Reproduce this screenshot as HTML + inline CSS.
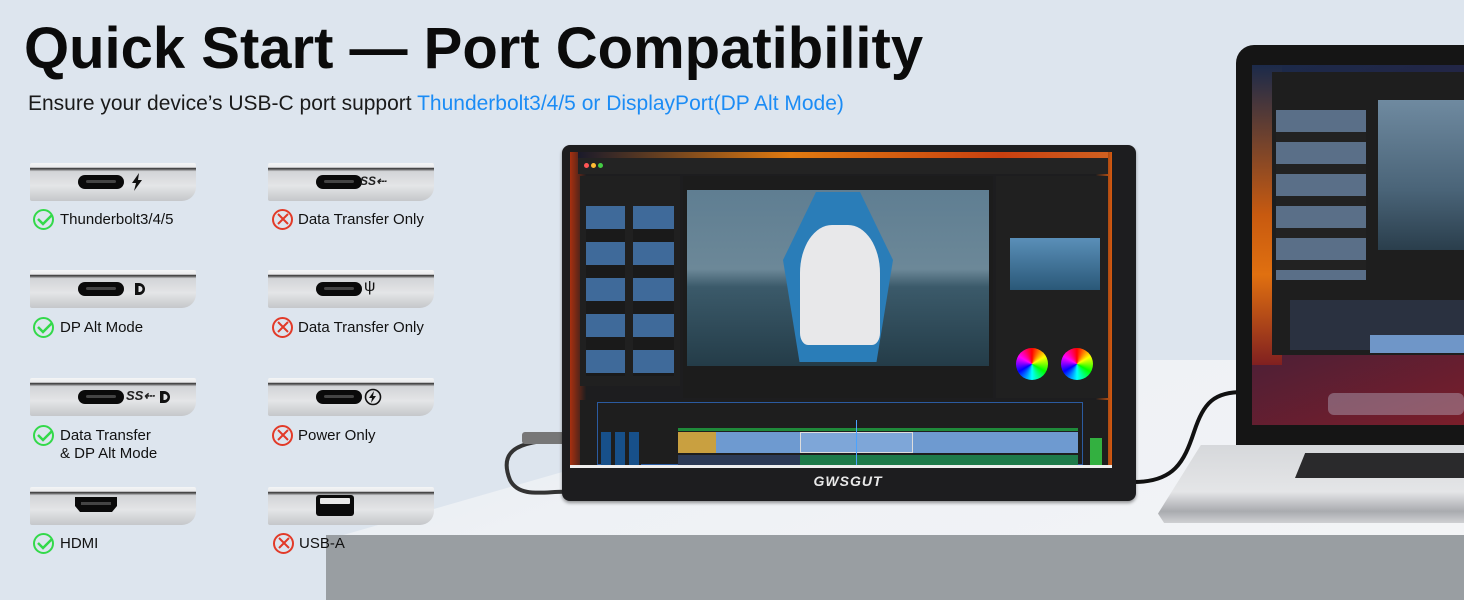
<!DOCTYPE html>
<html><head><meta charset="utf-8"><style>
*{margin:0;padding:0;box-sizing:border-box}
body{width:1464px;height:600px;overflow:hidden;background:#dde5ee;font-family:"Liberation Sans",sans-serif;position:relative}
.abs{position:absolute}
h1{position:absolute;left:24px;top:15px;font-size:58px;font-weight:bold;color:#0b0b0b;letter-spacing:0px;white-space:nowrap;transform-origin:left top}
.sub{position:absolute;left:28px;top:92px;font-size:21px;color:#1a1a1a;white-space:nowrap}
.sub span{color:#1b8cf5}
.card{position:absolute;width:166px;height:38px;border-radius:2px 2px 14px 2px;background:linear-gradient(#f4f5f6 0,#e9eaec 12%,#3a3a3a 13%,#555 16%,#d2d4d7 22%,#e4e5e7 60%,#c5c7ca 100%)}
.usbc{position:absolute;width:46px;height:14px;border-radius:7px;background:#0a0a0a;border:0}
.usbc:after{content:"";position:absolute;left:8px;right:8px;top:5px;height:3px;border-radius:2px;background:#444}
.lab{position:absolute;font-size:15px;color:#111;line-height:18px;white-space:nowrap}
.ic{position:absolute;width:21px;height:21px;border-radius:50%}
.ok{border:2.5px solid #33d94a}
.no{border:2px solid #e23a28}
</style></head><body>
<!-- desk -->
<div class="abs" style="left:326px;top:360px;width:1138px;height:180px;background:linear-gradient(160deg,#e4eaf0 0,#eef1f5 40%,#f3f4f6 100%);clip-path:polygon(0 100%,55% 0,100% 0,100% 100%)"></div>
<div class="abs" style="left:326px;top:535px;width:1138px;height:65px;background:#999ea2"></div>

<h1>Quick Start — Port Compatibility</h1>
<div class="sub">Ensure your device’s USB-C port support <span>Thunderbolt3/4/5 or DisplayPort(DP Alt Mode)</span></div>

<!-- cards col1 -->
<div class="card" style="left:30px;top:163px"><div class="usbc" style="left:48px;top:12px"></div><svg class="abs" style="left:100px;top:10px" width="14" height="18"><path d="M9 0L2 10h4l-2 8 8-11H8z" fill="#111"/></svg></div>
<div class="card" style="left:30px;top:270px"><div class="usbc" style="left:48px;top:12px"></div><svg class="abs" style="left:103px;top:12px" width="14" height="15"><path d="M2 1h4a6 6 0 010 12H2zM5.5 4v6h1a3 3 0 000-6z" fill="#111" fill-rule="evenodd"/></svg></div>
<div class="card" style="left:30px;top:378px"><div class="usbc" style="left:48px;top:12px"></div><span class="abs" style="left:96px;top:10px;font-size:13px;font-style:italic;font-weight:bold;color:#222">SS⇠</span><svg class="abs" style="left:128px;top:12px" width="14" height="15"><path d="M2 1h4a6 6 0 010 12H2zM5.5 4v6h1a3 3 0 000-6z" fill="#111" fill-rule="evenodd"/></svg></div>
<div class="card" style="left:30px;top:487px"><svg class="abs" style="left:45px;top:10px" width="42" height="16"><path d="M0 0h42v9l-5 6H5L0 9z" fill="#0a0a0a"/><rect x="6" y="5" width="30" height="3" fill="#444"/></svg></div>

<!-- cards col2 -->
<div class="card" style="left:268px;top:163px"><div class="usbc" style="left:48px;top:12px"></div><span class="abs" style="left:92px;top:11px;font-size:12px;font-style:italic;font-weight:bold;color:#222">SS⇠</span></div>
<div class="card" style="left:268px;top:270px"><div class="usbc" style="left:48px;top:12px"></div><span class="abs" style="left:96px;top:8px;font-size:16px;color:#111">ψ</span></div>
<div class="card" style="left:268px;top:378px"><div class="usbc" style="left:48px;top:12px"></div><svg class="abs" style="left:96px;top:10px" width="18" height="18"><circle cx="9" cy="9" r="7.5" fill="none" stroke="#111" stroke-width="1.6"/><path d="M10 3L5 10h3l-1 5 5-7H9z" fill="#111"/></svg></div>
<div class="card" style="left:268px;top:487px"><div class="abs" style="left:48px;top:8px;width:38px;height:21px;border-radius:3px;background:#0a0a0a"><div class="abs" style="left:4px;top:3px;width:30px;height:6px;background:#e8e8e8;border-radius:1px"></div></div></div>

<!-- labels -->
<div class="ic ok" style="left:33px;top:209px"></div><div class="lab" style="left:60px;top:211px">Thunderbolt3/4/5</div>
<div class="ic ok" style="left:33px;top:317px"></div><div class="lab" style="left:60px;top:319px">DP Alt Mode</div>
<div class="ic ok" style="left:33px;top:425px"></div><div class="lab" style="left:60px;top:427px">Data Transfer<br>&amp; DP Alt Mode</div>
<div class="ic ok" style="left:33px;top:533px"></div><div class="lab" style="left:60px;top:535px">HDMI</div>
<div class="ic no" style="left:272px;top:209px"></div><div class="lab" style="left:298px;top:211px">Data Transfer Only</div>
<div class="ic no" style="left:272px;top:317px"></div><div class="lab" style="left:298px;top:319px">Data Transfer Only</div>
<div class="ic no" style="left:272px;top:425px"></div><div class="lab" style="left:298px;top:427px">Power Only</div>
<div class="ic no" style="left:273px;top:533px"></div><div class="lab" style="left:299px;top:535px">USB-A</div>
<svg class="abs" style="left:0;top:0" width="460" height="600">
<g fill="none" stroke="#33d94a" stroke-width="2.5"><path d="M38 219l5 5 9-9"/><path d="M38 327l5 5 9-9"/><path d="M38 435l5 5 9-9"/><path d="M38 543l5 5 9-9"/></g>
<g fill="none" stroke="#e23a28" stroke-width="2"><path d="M278 214l10 10M288 214l-10 10"/><path d="M278 322l10 10M288 322l-10 10"/><path d="M278 430l10 10M288 430l-10 10"/><path d="M279 538l10 10M289 538l-10 10"/></g>
</svg>

<!-- cables -->
<svg class="abs" style="left:500px;top:380px" width="964" height="150"><path d="M65 60C10 60 0 75 10 100c10 20 40 10 60 12" fill="none" stroke="#333" stroke-width="4"/><rect x="22" y="52" width="45" height="12" rx="3" fill="#777"/><path d="M634 102c40 0 50-20 60-50s20-40 50-40" fill="none" stroke="#111" stroke-width="4"/></svg>

<!-- laptop -->
<div class="abs" style="left:1236px;top:45px;width:240px;height:405px;background:#151515;border-radius:18px 0 0 0"></div>
<div class="abs" style="left:1252px;top:65px;width:212px;height:360px;background:linear-gradient(160deg,#1b2a4a 0,#2a2040 40%,#7a1e2a 100%)"></div>
<div class="abs" style="left:1252px;top:65px;width:30px;height:300px;background:linear-gradient(#1b2a4a,#c85a10 50%,#e07010 70%,#802020)"></div>
<div class="abs" style="left:1272px;top:72px;width:192px;height:283px;background:#1e1e1e"></div>
<div class="abs" style="left:1378px;top:100px;width:86px;height:150px;background:linear-gradient(#6f8aa0,#4a6478 60%,#2a3e4c)"></div>
<div class="abs" style="left:1276px;top:110px;width:90px;height:170px;background:repeating-linear-gradient(#5a6f88 0 22px,#222 22px 32px)"></div>
<div class="abs" style="left:1290px;top:300px;width:174px;height:50px;background:#2a3140"></div>
<div class="abs" style="left:1370px;top:335px;width:94px;height:18px;background:#6f96c8"></div>
<div class="abs" style="left:1328px;top:393px;width:136px;height:22px;border-radius:6px;background:rgba(200,210,230,.35)"></div>
<div class="abs" style="left:1158px;top:445px;width:306px;height:78px;background:linear-gradient(#d6d8db,#e4e5e7 60%,#a9abaf 85%,#cfd0d3);clip-path:polygon(14% 0,100% 0,100% 100%,2% 100%,0 88%)"></div>
<div class="abs" style="left:1295px;top:453px;width:169px;height:25px;background:#2a2a2c;clip-path:polygon(6% 0,100% 0,100% 100%,0 100%)"></div>

<!-- monitor -->
<div class="abs" style="left:562px;top:145px;width:574px;height:356px;background:#1d1d1f;border-radius:8px;box-shadow:0 2px 3px rgba(0,0,0,.4)"></div>
<div class="abs" style="left:570px;top:152px;width:542px;height:313px;background:linear-gradient(90deg,#a83010 0,#1d1d1f 3%,#1d1d1f 97%,#d85a10 100%)"></div>
<div class="abs" style="left:578px;top:152px;width:530px;height:10px;background:linear-gradient(90deg,#1a1a2a,#e07a10 40%,#c84010 80%,#d06020)"></div>
<div class="abs" style="left:570px;top:465px;width:542px;height:3px;background:#eee"></div>
<div class="abs" style="left:578px;top:158px;width:530px;height:16px;background:#232323"></div>
<div class="abs" style="left:584px;top:163px;width:5px;height:5px;border-radius:50%;background:#f55;box-shadow:7px 0 #fb3,14px 0 #4c4"></div>
<div class="abs" style="left:580px;top:176px;width:100px;height:210px;background:#202020"></div>
<div class="abs" style="left:586px;top:206px;width:88px;height:170px;background:repeating-linear-gradient(#3f6a9a 0 23px,#1a1a1a 23px 36px)"></div>
<div class="abs" style="left:625px;top:206px;width:8px;height:170px;background:#202020"></div>
<div class="abs" style="left:683px;top:176px;width:310px;height:222px;background:#1c1c1c"></div>
<div class="abs" style="left:687px;top:190px;width:302px;height:176px;background:linear-gradient(#5f7e92 0,#6c8898 45%,#3b5a6a 55%,#243c48 100%)"></div>
<div class="abs" style="left:783px;top:192px;width:110px;height:170px;background:#2a7db8;clip-path:polygon(30% 0,70% 0,100% 40%,85% 100%,15% 100%,0 40%)"></div>
<div class="abs" style="left:800px;top:225px;width:80px;height:120px;background:#e8e8ea;border-radius:40% 40% 10% 10%"></div>
<div class="abs" style="left:996px;top:176px;width:112px;height:222px;background:#202020"></div>
<div class="abs" style="left:1010px;top:238px;width:90px;height:52px;background:linear-gradient(#5a8fb8,#2a5878)"></div>
<div class="abs" style="left:1016px;top:348px;width:32px;height:32px;border-radius:50%;background:conic-gradient(red,yellow,lime,cyan,blue,magenta,red)"></div>
<div class="abs" style="left:1061px;top:348px;width:32px;height:32px;border-radius:50%;background:conic-gradient(red,yellow,lime,cyan,blue,magenta,red)"></div>
<div class="abs" style="left:580px;top:400px;width:528px;height:65px;background:#1e1e1e"></div>
<div class="abs" style="left:597px;top:402px;width:486px;height:63px;border:1px solid #2b5ba0"></div>
<div class="abs" style="left:678px;top:428px;width:400px;height:3px;background:#1f8a3a"></div>
<div class="abs" style="left:678px;top:432px;width:400px;height:21px;background:#6e9ad0"></div>
<div class="abs" style="left:678px;top:432px;width:38px;height:21px;background:#c9a040"></div>
<div class="abs" style="left:800px;top:432px;width:113px;height:21px;background:#7ea6d8;border:1px solid #ddd"></div>
<div class="abs" style="left:678px;top:455px;width:122px;height:10px;background:#2c3a55"></div>
<div class="abs" style="left:800px;top:455px;width:278px;height:10px;background:#1e7a4a"></div>
<div class="abs" style="left:601px;top:432px;width:40px;height:33px;background:repeating-linear-gradient(90deg,#17508a 0 10px,#1e1e1e 10px 14px)"></div>
<div class="abs" style="left:1090px;top:438px;width:12px;height:27px;background:#33b040"></div>
<div class="abs" style="left:856px;top:420px;width:1px;height:45px;background:#4aa3ff"></div>
<div class="abs" style="left:798px;top:473px;width:100px;text-align:center;font-size:14px;font-weight:bold;font-style:italic;color:#e8e8e8;letter-spacing:1px">GWSGUT</div>
</body></html>
